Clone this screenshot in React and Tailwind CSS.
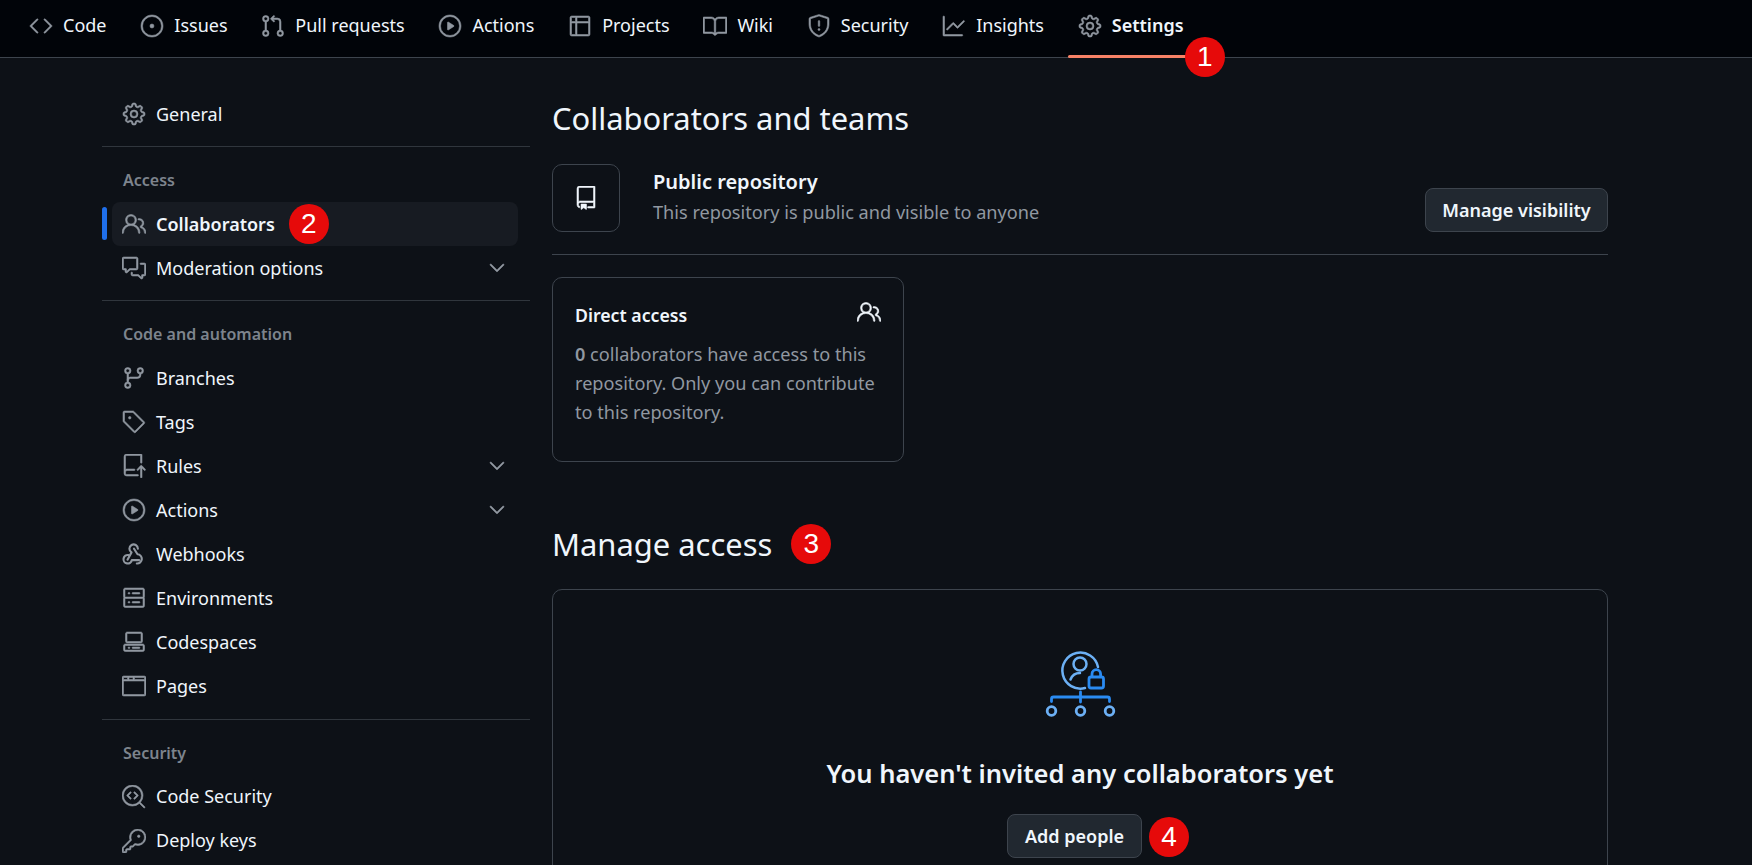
import {
  GoBook, GoBrowser, GoChevronDown, GoCode, GoCodescan, GoCodespaces, GoCommentDiscussion, GoGear,
  GoGitBranch, GoGitPullRequest, GoGraph, GoIssueOpened, GoKey, GoPeople, GoPlay, GoRepo, GoRepoPush,
  GoServer, GoShield, GoTable, GoTag,
} from 'react-icons/go';

// react-icons ships the 24px octicons, the screenshot has the heavier 16px ones scaled up
const ICON = { size: 24, strokeWidth: 0.55 };

function WebhookIcon({ size, className }) {
  return (
    <svg className={className} width={size} height={size} viewBox="-0.5 -0.5 17 17" fill="none" stroke="currentColor" strokeWidth="1.5" strokeLinecap="round" strokeLinejoin="round">
      <path d="M10.75 4.25a3 3 0 1 0-4.5 2.600L3.4 12" />
      <path d="M4.100 8.750A3 3 0 1 0 6.500 12.300h5.100" />
      <path d="M8 4.250l2.500 3.900A3 3 0 1 1 10 14.700" />
    </svg>
  );
}

const tabs = [
  { label: 'Code', icon: GoCode },
  { label: 'Issues', icon: GoIssueOpened },
  { label: 'Pull requests', icon: GoGitPullRequest },
  { label: 'Actions', icon: GoPlay },
  { label: 'Projects', icon: GoTable },
  { label: 'Wiki', icon: GoBook },
  { label: 'Security', icon: GoShield },
  { label: 'Insights', icon: GoGraph },
  { label: 'Settings', icon: GoGear, active: true },
];

const automation = [
  { label: 'Branches', icon: GoGitBranch },
  { label: 'Tags', icon: GoTag },
  { label: 'Rules', icon: GoRepoPush, more: true },
  { label: 'Actions', icon: GoPlay, more: true },
  { label: 'Webhooks', icon: WebhookIcon },
  { label: 'Environments', icon: GoServer },
  { label: 'Codespaces', icon: GoCodespaces },
  { label: 'Pages', icon: GoBrowser },
];

function Badge({ n, className = '' }) {
  return (
    <span className={`flex h-[40px] w-[40px] shrink-0 items-center justify-center rounded-full bg-[#e60a0a] font-['Liberation_Sans',sans-serif] text-[28px] leading-none text-white ${className}`}>
      {n}
    </span>
  );
}

function SideRow({ item, active, badge }) {
  const Icon = item.icon;
  return (
    <div className="relative h-[44.05px]">
      {active && <div className="absolute left-0 top-[5px] h-[33px] w-[5px] rounded-full bg-[#1f6feb]" />}
      <div className={`ml-[10px] mr-[12px] flex h-full items-center rounded-lg pl-[10px] pr-[9px] ${active ? 'bg-[#171b22]' : ''}`}>
        <Icon className="mr-[10px] shrink-0 text-[#9198a1]" {...ICON} />
        <span className={`text-[18px] text-[#f0f6fc] ${active ? 'font-semibold' : ''}`}>{item.label}</span>
        {badge}
        {item.more && <GoChevronDown className="ml-auto text-[#9198a1]" {...ICON} />}
      </div>
    </div>
  );
}

function SideHeading({ children }) {
  return (
    <div className="flex h-[44px] items-center pl-[21px] text-[16px] font-semibold text-[#7d848d]">{children}</div>
  );
}

function AccessIllustration() {
  return (
    <svg width="72" height="70" viewBox="1043 649 72 70" fill="none">
      <path d="M1097 667a18 18 0 1 0-13 21" stroke="#6cb0f5" strokeWidth="2.5" strokeLinecap="round" />
      <circle cx="1079" cy="664" r="6.5" stroke="#6cb0f5" strokeWidth="2.5" />
      <path d="M1069.5 679.5c1.5-4 5-6.500 9.500-6.500" stroke="#6cb0f5" strokeWidth="2.5" strokeLinecap="round" />
      <rect x="1088" y="677" width="14.500" height="11" rx="2" stroke="#2a8bf2" strokeWidth="2.800" />
      <path d="M1091 677v-3a4.300 4.300 0 0 1 8.600 0v3" stroke="#2a8bf2" strokeWidth="2.800" />
      <path d="M1050.500 701.500v-2.500a2 2 0 0 1 2-2h54a2 2 0 0 1 2 2v2.500M1079.500 692v10" stroke="#2a8bf2" strokeWidth="2.800" strokeLinecap="round" />
      <circle cx="1050.500" cy="711" r="4.300" stroke="#6cb0f5" strokeWidth="2.800" />
      <circle cx="1079.500" cy="711" r="4.300" stroke="#6cb0f5" strokeWidth="2.800" />
      <circle cx="1108.500" cy="711" r="4.300" stroke="#6cb0f5" strokeWidth="2.800" />
    </svg>
  );
}

export default function App() {
  return (
    <div className="h-[865px] overflow-hidden bg-[#0d1117] font-['Noto_Sans',sans-serif] text-[#f0f6fc]">
      <nav className="flex h-[58px] items-stretch gap-[13.8px] border-b border-[#3d444d] bg-[#010409] pl-[19px]">
        {tabs.map((tab) => {
          const Icon = tab.icon;
          return (
            <div key={tab.label} className="relative flex items-center px-[10px] pb-[6px]">
              <Icon className="mr-[10px] text-[#9198a1]" {...ICON} />
              <span className={`text-[18px] ${tab.active ? 'font-semibold' : ''}`}>{tab.label}</span>
              {tab.active && (
                <>
                  <div className="absolute -bottom-[1px] left-0 right-[-8px] h-[3px] rounded-sm bg-[#f78166]" />
                  <Badge n={1} className="absolute left-[117px] top-[37px]" />
                </>
              )}
            </div>
          );
        })}
      </nav>

      <div className="flex gap-[22px] pl-[102px]">
        <aside className="w-[428px] shrink-0 pt-[34px]">
          <SideRow item={{ label: 'General', icon: GoGear }} />
          <div className="mt-[10px] border-t border-[#30363d]" />
          <div className="pt-[11px]"><SideHeading>Access</SideHeading></div>
          <SideRow
            item={{ label: 'Collaborators', icon: GoPeople }}
            active
            badge={<Badge n={2} className="ml-[14px]" />}
          />
          <SideRow item={{ label: 'Moderation options', icon: GoCommentDiscussion, more: true }} />
          <div className="mt-[10px] border-t border-[#30363d]" />
          <div className="pt-[11px]"><SideHeading>Code and automation</SideHeading></div>
          {automation.map((item) => <SideRow key={item.label} item={item} />)}
          <div className="mt-[10px] border-t border-[#30363d]" />
          <div className="pt-[11px]"><SideHeading>Security</SideHeading></div>
          <SideRow item={{ label: 'Code Security', icon: GoCodescan }} />
          <SideRow item={{ label: 'Deploy keys', icon: GoKey }} />
        </aside>

        <main className="w-[1056px] shrink-0">
          <h2 className="mt-[38px] text-[30.9px] leading-[44px]">Collaborators and teams</h2>

          <div className="mt-[24px] flex items-center">
            <div className="flex h-[68px] w-[68px] items-center justify-center rounded-[10px] border border-[#3d444d]">
              <GoRepo {...ICON} />
            </div>
            <div className="ml-[33px] -mt-[2px]">
              <div className="text-[20px] font-semibold leading-[30px]">Public repository</div>
              <div className="text-[18.15px] leading-[30px] text-[#9198a1]">This repository is public and visible to anyone</div>
            </div>
            <button className="ml-auto mt-[24px] h-[44px] w-[183px] rounded-lg border border-[#3d444d] bg-[#212830] text-[18px] font-semibold">
              Manage visibility
            </button>
          </div>
          <div className="mt-[22px] border-t border-[#3d444d]" />

          <div className="mt-[22px] h-[185px] w-[352px] rounded-[10px] border border-[#3d444d] px-[22px] pt-[23px]">
            <div className="flex justify-between">
              <span className="text-[17.7px] font-semibold leading-[28px]">Direct access</span>
              <GoPeople className="-mt-[1px]" {...ICON} />
            </div>
            <p className="mt-[11px] text-[18.15px] leading-[29px] text-[#9198a1]">
              <b className="font-semibold">0</b> collaborators have access to this repository. Only you can contribute to this repository.
            </p>
          </div>

          <div className="mt-[60px] flex items-center">
            <h2 className="text-[30.9px] leading-[44px]">Manage access</h2>
            <Badge n={3} className="ml-[19px]" />
          </div>

          <div className="mt-[23px] flex h-[300px] flex-col items-center rounded-[10px] border border-[#3d444d] pt-[59px]">
            <AccessIllustration />
            <div className="mt-[36px] text-[25.5px] font-semibold leading-[36px]">You haven't invited any collaborators yet</div>
            <div className="relative mr-[11px] mt-[23px]">
              <button className="h-[44px] w-[135px] rounded-lg border border-[#3d444d] bg-[#212830] text-[18px] font-semibold">
                Add people
              </button>
              <Badge n={4} className="absolute left-[calc(100%+7px)] top-[3px]" />
            </div>
          </div>
        </main>
      </div>
    </div>
  );
}
